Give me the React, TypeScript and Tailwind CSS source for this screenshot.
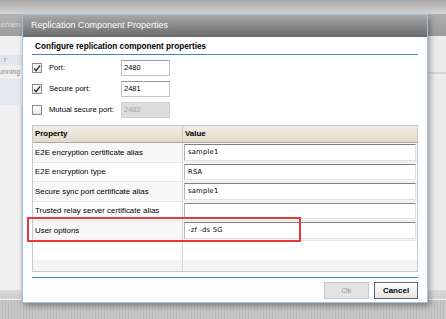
import React from "react";

const font = { fontFamily: "'Liberation Sans', Arial, sans-serif" };

function Check({ checked }: { checked: boolean }) {
  return (
    <span className="flex h-[10px] w-[10px] items-center justify-center border border-[#8c8c8c] bg-gradient-to-b from-white to-[#e6e6e6]">
      {checked && (
        <svg width="9" height="9" viewBox="0 0 9 9">
          <path d="M1.5 4.5 L3.5 7 L8 1" fill="none" stroke="#1e2a3a" strokeWidth="1.5" />
        </svg>
      )}
    </span>
  );
}

const ports = [
  { label: "Port:", value: "2480", checked: true, disabled: false },
  { label: "Secure port:", value: "2481", checked: true, disabled: false },
  { label: "Mutual secure port:", value: "2482", checked: false, disabled: true },
];

const rows = [
  { name: "E2E encryption certificate alias", value: "sample1", h: "h-[20px]" },
  { name: "E2E encryption type", value: "RSA", h: "h-[19px]" },
  { name: "Secure sync port certificate alias", value: "sample1", h: "h-[20px]" },
  { name: "Trusted relay server certificate alias", value: "", h: "h-[19px]" },
  { name: "User options", value: "-zf -ds 5G", h: "h-[20px]" },
];

export default function App() {
  return (
    <div className="relative h-[319px] w-[446px] overflow-hidden bg-[#e9e9e9] text-black" style={font}>
      {/* background application */}
      <div className="h-[14px] bg-gradient-to-b from-[#a9a9a9] via-[#bdbdbd] to-[#d6d6d6]" />
      <div className="flex h-[276px]">
        <div className="flex w-[22px] flex-col bg-[#f0f0f0]">
          <div className="flex h-[22px] items-center overflow-hidden bg-gradient-to-b from-[#b4b4b4] to-[#9c9c9c] text-[8px] whitespace-nowrap text-[#dedede]">
            <span className="-ml-[4px]">gemen</span>
          </div>
          <div className="h-[19px]" />
          <div className="flex h-[10px] items-center overflow-hidden bg-[#dfe6ee] text-[7px] text-[#8a8a8a]">
            <span className="ml-[4px]">r</span>
          </div>
          <div className="flex h-[14px] items-center overflow-hidden text-[7px] whitespace-nowrap text-[#8a8a8a]">
            <span className="-ml-[1px]">unning</span>
          </div>
          <div className="h-[26px] bg-[#e3e9f0]" />
          <div className="flex-1 border-r border-[#d8d8d8]" />
        </div>
        <div className="flex-1" />
        <div className="flex w-[18px] flex-col bg-[#ececec]">
          <div className="h-[22px] bg-gradient-to-b from-[#b0b0b0] to-[#9a9a9a]" />
          <div className="h-[36px]" />
          <div className="h-[2px] bg-[#d6d6d6]" />
        </div>
      </div>
      <div className="h-[29px] bg-[repeating-linear-gradient(90deg,#c6c6c6_0px,#c6c6c6_2px,#bcbcbc_2px,#bcbcbc_3px)]">
        <div className="h-[10px] border-b border-[#f2f2f2] bg-gradient-to-b from-[#dadada] to-[#cfcfcf]" />
      </div>

      {/* dialog */}
      <div className="absolute top-[14px] left-[22px] flex h-[289px] w-[406px] flex-col border border-[#a9c4df] bg-white shadow-[2px_3px_6px_rgba(0,0,0,0.35)]">
        <div className="flex h-[22px] items-center bg-gradient-to-b from-[#a9a9a9] to-[#6b6b6b] pl-[8px] text-[9px] text-white">
          Replication Component Properties
        </div>
        <div className="flex flex-1 flex-col px-[9px]">
          <div className="flex h-[16px] items-end pl-[3px] text-[8.2px] font-bold">
            Configure replication component properties
          </div>
          <div className="mt-[1px] h-px bg-[#3a86c4]" />

          <div className="mt-[5px] flex flex-col gap-[5px]">
            {ports.map((p) => (
              <div key={p.label} className="flex h-[16px] items-center">
                <Check checked={p.checked} />
                <span className="ml-[7px] w-[72px] text-[7.6px]">{p.label}</span>
                <div
                  className={
                    p.disabled
                      ? "flex h-[16px] w-[49px] items-center border border-[#d0d0d0] bg-[#dcdcdc] pl-[2px] text-[7.5px] text-[#a4a4a4]"
                      : "flex h-[16px] w-[49px] items-center border border-[#c4c4c4] border-t-[#9a9a9a] bg-white pl-[2px] text-[7.5px]"
                  }
                >
                  {p.value}
                </div>
              </div>
            ))}
          </div>

          {/* property table */}
          <div className="mt-[7px] flex h-[147px] flex-col border border-[#c9c9c9] text-[7.9px]">
            <div className="flex h-[17px] shrink-0 border-b border-[#a9a9a9] bg-gradient-to-b from-[#f1eee6] to-[#e1dbca] font-bold">
              <div className="flex w-[150px] items-center border-r border-[#cfcac0] pl-[2px]">Property</div>
              <div className="flex flex-1 items-center pl-[2px]">Value</div>
            </div>
            {rows.map((r, i) => (
              <div key={r.name} className={`flex ${r.h} shrink-0 border-b border-[#e6e6e6] ${i % 2 === 0 ? "bg-[#f7f7f7]" : "bg-white"}`}>
                <div className="flex w-[150px] items-center border-r border-[#d8d8d8] pl-[2px] whitespace-nowrap">{r.name}</div>
                <div className="flex flex-1 p-px">
                  <div className="flex flex-1 items-center border border-[#e0e0e0] border-t-[#7e7e7e] border-l-[#b4b4b4] bg-white pl-[3px] text-[6.8px] tracking-[0.2px]" style={{ fontFamily: "'DejaVu Sans', sans-serif" }}>
                    {r.value}
                  </div>
                </div>
              </div>
            ))}
            <div className="flex h-[19px] shrink-0 bg-white">
              <div className="w-[150px] border-r border-[#d8d8d8]" />
            </div>
            <div className="flex flex-1 bg-[#f4f4f4]">
              <div className="w-[150px] border-r border-[#d8d8d8]" />
            </div>
          </div>

          <div className="mt-[5px] h-px bg-[#3a86c4]" />
          <div className="mt-[4px] flex justify-end gap-[5px]">
            <button className="h-[17px] w-[45px] border border-[#b9cadb] bg-[#e3e3e3] text-[8px] text-[#9c9c9c]">Ok</button>
            <button className="h-[17px] w-[44px] border border-[#5f6770] bg-gradient-to-b from-white to-[#e4e4e4] text-[8px] font-bold">Cancel</button>
          </div>
        </div>

        {/* highlight */}
        <div className="absolute top-[202px] left-[4px] h-[25px] w-[274px] border-2 border-[#e5393a]" />
      </div>
    </div>
  );
}
